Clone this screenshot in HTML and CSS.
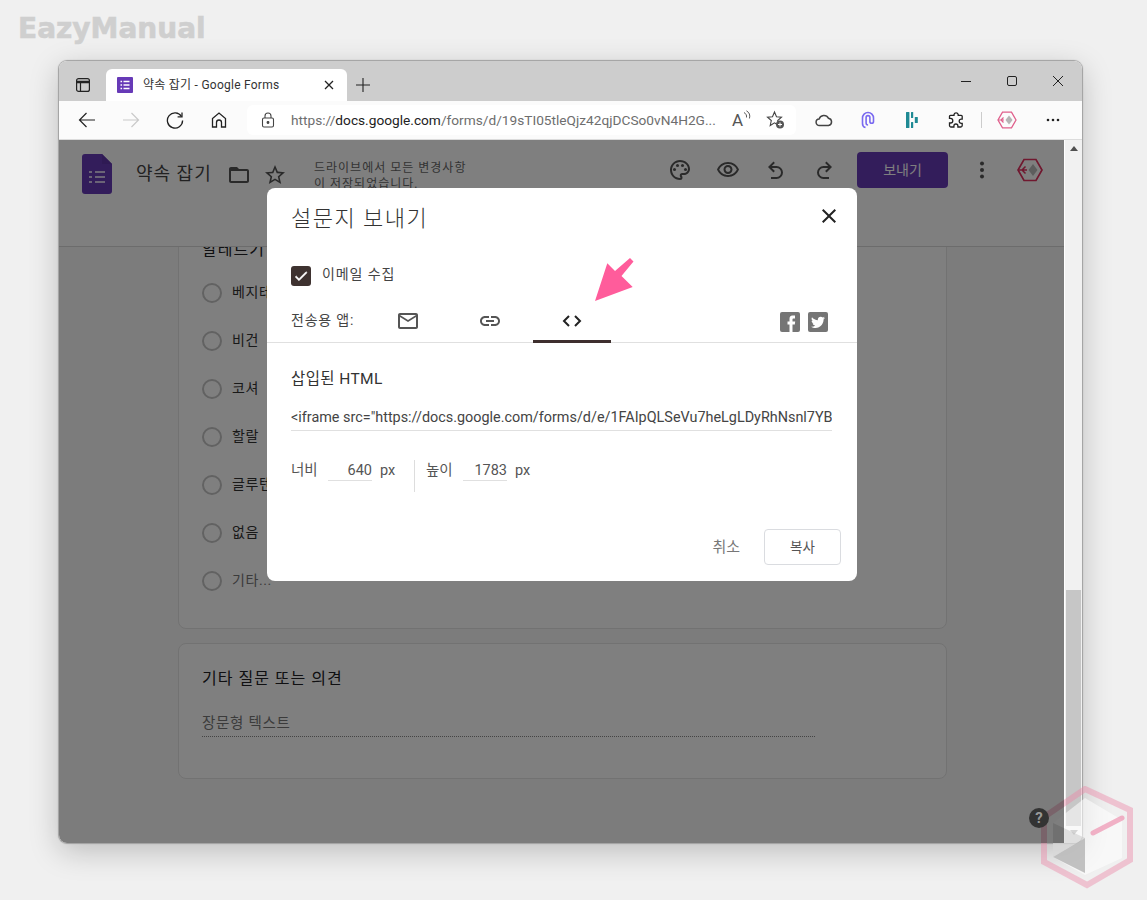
FILE: index.html
```html
<!DOCTYPE html>
<html lang="ko">
<head>
    <meta charset="UTF-8">
    <title>약속 잡기 - Google Forms</title>
    <link rel="stylesheet" href="styles.css">
</head>
<body>
    <div class="brand">EazyManual</div>

    <div class="window">
        <!-- tab strip -->
        <div class="tabstrip">
            <div class="tab-sidebar">
                <svg width="16" height="16" viewBox="0 0 16 16" fill="none" stroke="#222" stroke-width="1.2"><rect x="1.6" y="1.6" width="12.8" height="12.8" rx="2"/><path d="M1.6 5h12.8" stroke-width="2.4"/><path d="M5.5 5v9.4"/></svg>
            </div>
            <div class="tab">
                <svg width="16" height="16" viewBox="0 0 16 16"><rect width="16" height="16" rx="1" fill="#673ab7"/><path d="M3.5 4.5h1.6M6.5 4.5h6M3.5 8h1.6M6.5 8h6M3.5 11.5h1.6M6.5 11.5h6" stroke="#fff" stroke-width="1.6"/></svg>
                <span class="tab-title">약속 잡기 - Google Forms</span>
                <svg width="10" height="10" viewBox="0 0 10 10" stroke="#222" stroke-width="1.3"><path d="M1 1l8 8M9 1l-8 8"/></svg>
            </div>
            <div class="tab-new">
                <svg width="16" height="16" viewBox="0 0 16 16" stroke="#222" stroke-width="1.1"><path d="M8 1v14M1 8h14"/></svg>
            </div>
            <div class="win-controls">
                <svg width="12" height="12" viewBox="0 0 12 12" stroke="#222" stroke-width="1"><path d="M1 6.5h10"/></svg>
                <svg width="12" height="12" viewBox="0 0 12 12" fill="none" stroke="#222" stroke-width="1"><rect x="1.5" y="1.5" width="9" height="9" rx="1.5"/></svg>
                <svg width="12" height="12" viewBox="0 0 12 12" stroke="#222" stroke-width="1"><path d="M1 1l10 10M11 1L1 11"/></svg>
            </div>
        </div>

        <!-- address bar -->
        <div class="toolbar">
            <div class="nav-btn"><svg width="18" height="18" viewBox="0 0 18 18" fill="none" stroke="#222" stroke-width="1.2"><path d="M17 9H1.5M8.5 2L1.5 9l7 7"/></svg></div>
            <div class="nav-btn"><svg width="18" height="18" viewBox="0 0 18 18" fill="none" stroke="#c9c9c9" stroke-width="1.2"><path d="M1 9h15.5M9.5 2l7 7-7 7"/></svg></div>
            <div class="nav-btn"><svg width="18" height="18" viewBox="0 0 18 18" fill="none" stroke="#222" stroke-width="1.3"><path d="M15.5 5.5A7.6 7.6 0 1 0 16.6 9.5"/><path d="M16 1.5v4.4h-4.4"/></svg></div>
            <div class="nav-btn"><svg width="18" height="18" viewBox="0 0 18 18" fill="none" stroke="#222" stroke-width="1.3"><path d="M2.5 16V7.5L9 2l6.5 5.5V16h-4v-4.5a2.3 2.3 0 0 0-5 0V16z"/></svg></div>
            <div class="address">
                <svg width="14" height="16" viewBox="0 0 14 16" fill="none" stroke="#444" stroke-width="1.1"><rect x="1.5" y="6" width="11" height="9" rx="1.5"/><path d="M4 6V4a3 3 0 0 1 6 0v2"/><circle cx="7" cy="10.5" r=".9" fill="#444"/></svg>
                <span class="url"><span class="url-dim">https://</span>docs.google.com<span class="url-dim">/forms/d/19sTI05tleQjz42qjDCSo0vN4H2G...</span></span>
                <span class="read-aloud">A<svg width="8" height="12" viewBox="0 0 8 12" fill="none" stroke="#555" stroke-width="1"><path d="M1 2.5c2 1 3 3 2.5 5M3.5 .8c3 1.5 4 4.5 3 7.7"/></svg></span>
                <svg class="fav" width="20" height="20" viewBox="0 0 20 20"><path d="M8.5 2l2 4.7 5 .5-3.8 3.3 1.1 5-4.3-2.6-4.3 2.6 1.1-5L1.5 7.2l5-.5z" fill="none" stroke="#444" stroke-width="1.1"/><circle cx="14" cy="14.5" r="4" fill="#555"/><path d="M14 12.5v4M12 14.5h4" stroke="#fff" stroke-width="1"/></svg>
            </div>
            <div class="ext-icons">
                <span class="ext-cell"><svg width="18" height="14" viewBox="0 0 18 14" fill="none" stroke="#444" stroke-width="1.5"><path d="M4.5 12.5a3.2 3.2 0 0 1-.4-6.4 5 5 0 0 1 9.3-.9 3.7 3.7 0 0 1 .1 7.3z"/></svg></span>
                <span class="ext-cell"><svg width="14" height="18" viewBox="0 0 14 18" fill="none" stroke="#7a6af0" stroke-width="1.6"><path d="M4.5 16.5A4 4 0 0 1 1.5 12.5V7a5.5 5.5 0 0 1 11 0v3.5a1.8 1.8 0 0 1-3.6 0V6.5a1.9 1.9 0 0 0-3.8 0V12a2 2 0 0 0 2 2"/></svg></span>
                <span class="ext-cell"><svg width="14" height="18" viewBox="0 0 14 18" fill="#1f8a94"><rect x="1" y="1" width="3.4" height="16" rx=".5"/><rect x="6" y="1" width="2.2" height="6" rx=".5"/><rect x="6" y="11" width="2.2" height="6" rx=".5"/><rect x="9.8" y="6" width="3" height="6" rx=".5"/></svg></span>
                <span class="ext-cell"><svg width="18" height="18" viewBox="0 0 18 18" fill="none" stroke="#222" stroke-width="1.3"><path d="M7 3.5a2.2 2.2 0 0 1 4.2 0v.8h3a1 1 0 0 1 1 1v2.900h-.9a2.1 2.1 0 0 0 0 4.200h.9v2.100a1.500 1.500 0 0 1-1.500 1.500h-2.800v-1a2 2 0 0 0-4 0v1H4a1.500 1.500 0 0 1-1.500-1.500V12h1a2.300 2.300 0 0 0 0-4.600h-1V5.300a1 1 0 0 1 1-1H7z"/></svg></span>
                <span class="ext-sep"></span>
                <svg class="ext-hex" width="20" height="18" viewBox="0 0 20 18"><path d="M5.5 1.2h9L19 9l-4.500 7.800h-9L1 9z" fill="none" stroke="#e0608c" stroke-width="1.3"/><path d="M1 9h6M6.500 6.500L4 9l2.500 2.500" fill="none" stroke="#e0608c" stroke-width="1.2"/><path d="M12 4.500L15.500 9 12 13.500 8.500 9z" fill="#b5b5b5"/></svg>
                <svg class="ext-more" width="14" height="4" viewBox="0 0 14 4" fill="#222"><circle cx="2" cy="2" r="1.3"/><circle cx="7" cy="2" r="1.3"/><circle cx="12" cy="2" r="1.3"/></svg>
            </div>
        </div>

        <!-- page with the dialog on top -->
        <div class="viewport">
            <div class="page">
                <header class="form-header">
                    <svg class="form-logo" width="30" height="40" viewBox="0 0 30 40"><path d="M3 0h17l10 10v27a3 3 0 0 1-3 3H3a3 3 0 0 1-3-3V3a3 3 0 0 1 3-3z" fill="#673ab7"/><path d="M20 0l10 10H20z" fill="#5e35a8"/><path d="M7 18h3M13 18h10M7 23h3M13 23h10M7 28h3M13 28h10" stroke="#d6c8ee" stroke-width="2"/></svg>
                    <span class="form-title">약속 잡기</span>
                    <svg class="hdr-icon folder" width="24" height="24" viewBox="0 0 24 24"><path d="M20 6h-8l-2-2H4c-1.100 0-1.990.9-1.990 2L2 18c0 1.100.9 2 2 2h16c1.100 0 2-.9 2-2V8c0-1.100-.9-2-2-2zm0 12H4V8h16v10z"/></svg>
                    <svg class="hdr-icon star" width="24" height="24" viewBox="0 0 24 24"><path d="M22 9.240l-7.190-.62L12 2 9.190 8.630 2 9.240l5.460 4.730L5.820 21 12 17.270 18.180 21l-1.630-7.030L22 9.240zM12 15.400l-3.760 2.270 1-4.280-3.320-2.880 4.380-.38L12 6.100l1.710 4.040 4.380.38-3.320 2.880 1 4.280L12 15.400z"/></svg>
                    <div class="save-status">드라이브에서 모든 변경사항<br>이 저장되었습니다.</div>
                    <div class="hdr-actions">
                        <svg class="hdr-icon" width="24" height="24" viewBox="0 0 24 24"><path d="M12 22C6.490 22 2 17.510 2 12S6.490 2 12 2s10 4.040 10 9c0 3.310-2.690 6-6 6h-1.770c-.28 0-.5.22-.5.5 0 .12.05.23.13.33.41.47.64 1.060.64 1.670A2.500 2.500 0 0 1 12 22zm0-18c-4.410 0-8 3.590-8 8s3.590 8 8 8c.28 0 .5-.22.5-.5a.54.54 0 0 0-.14-.35c-.41-.46-.63-1.050-.63-1.650a2.500 2.500 0 0 1 2.500-2.500H16c2.210 0 4-1.790 4-4 0-3.860-3.590-7-8-7z"/><circle cx="6.500" cy="11.500" r="1.500"/><circle cx="9.500" cy="7.500" r="1.500"/><circle cx="14.500" cy="7.500" r="1.500"/><circle cx="17.500" cy="11.500" r="1.500"/></svg>
                        <svg class="hdr-icon" width="24" height="24" viewBox="0 0 24 24"><path d="M12 6a9.770 9.770 0 0 1 8.820 5.500C19.170 14.870 15.790 17 12 17s-7.170-2.130-8.820-5.500A9.770 9.770 0 0 1 12 6m0-2C7 4 2.730 7.110 1 11.500 2.730 15.890 7 19 12 19s9.270-3.110 11-7.500C21.270 7.110 17 4 12 4zm0 5a2.500 2.500 0 0 1 0 5 2.500 2.500 0 0 1 0-5m0-2c-2.480 0-4.500 2.020-4.500 4.500S9.520 16 12 16s4.500-2.020 4.500-4.500S14.480 7 12 7z"/></svg>
                        <svg class="hdr-icon" width="24" height="24" viewBox="0 0 24 24"><path d="M12.500 8H7.800l3.100-3.100L9.500 3.500 4 9l5.500 5.500 1.400-1.400L7.800 10h4.700a4.500 4.500 0 0 1 0 9H7v2h5.500a6.500 6.500 0 0 0 0-13z"/></svg>
                        <svg class="hdr-icon" width="24" height="24" viewBox="0 0 24 24"><path d="M11.500 8h4.700l-3.100-3.100 1.400-1.400L20 9l-5.500 5.500-1.400-1.400 3.100-3.100h-4.700a4.500 4.500 0 0 0 0 9H17v2h-5.500a6.500 6.500 0 0 1 0-13z"/></svg>
                    </div>
                    <button type="button" class="send-btn">보내기</button>
                    <svg class="hdr-more" width="6" height="18" viewBox="0 0 6 18"><circle cx="3" cy="2.500" r="2"/><circle cx="3" cy="9" r="2"/><circle cx="3" cy="15.500" r="2"/></svg>
                    <svg class="hdr-avatar" width="26" height="24" viewBox="0 0 26 24"><path d="M7 1.500h12L25 12l-6 10.500H7L1 12z" fill="none" stroke="#e0305f" stroke-width="1.700"/><path d="M1 12h9M8.500 8.500L5 12l3.500 3.500" fill="none" stroke="#e0305f" stroke-width="1.500"/><path d="M16 6l4.500 6-4.500 6-4.500-6z" fill="#bbb"/></svg>
                </header>

                <main class="form-body">
                    <section class="card card-options">
                        <h3 class="card-title">알레르기</h3>
                        <div class="option"><span class="radio"></span>베지테리언</div>
                        <div class="option"><span class="radio"></span>비건</div>
                        <div class="option"><span class="radio"></span>코셔</div>
                        <div class="option"><span class="radio"></span>할랄</div>
                        <div class="option"><span class="radio"></span>글루텐 프리</div>
                        <div class="option"><span class="radio"></span>없음</div>
                        <div class="option option-other"><span class="radio"></span>기타...</div>
                    </section>
                    <section class="card card-long">
                        <h3 class="card-title">기타 질문 또는 의견</h3>
                        <div class="long-answer">장문형 텍스트</div>
                    </section>
                </main>

                <div class="scrim"></div>
                <div class="help">?</div>

                <!-- send form dialog -->
                <div class="dialog">
                    <div class="dialog-head">
                        <h2>설문지 보내기</h2>
                        <svg width="24" height="24" viewBox="0 0 24 24" fill="#222"><path d="M19 6.410L17.590 5 12 10.590 6.410 5 5 6.410 10.590 12 5 17.590 6.410 19 12 13.410 17.590 19 19 17.590 13.410 12z"/></svg>
                    </div>
                    <label class="collect">
                        <span class="checkbox"><svg width="16" height="16" viewBox="0 0 24 24" fill="#fff"><path d="M9 16.170L4.830 12l-1.420 1.410L9 19 21 7l-1.410-1.410z" stroke="#fff"/></svg></span>
                        <span class="collect-text">이메일 수집</span>
                    </label>
                    <div class="send-tabs">
                        <span class="send-label">전송용 앱:</span>
                        <div class="send-tab">
                            <svg width="24" height="24" viewBox="0 0 24 24" fill="#555"><path d="M20 4H4c-1.100 0-2 .9-2 2v12c0 1.100.9 2 2 2h16c1.100 0 2-.9 2-2V6c0-1.100-.9-2-2-2zm0 14H4V8l8 5 8-5v10zm-8-7L4 6h16l-8 5z"/></svg>
                        </div>
                        <div class="send-tab">
                            <svg width="24" height="24" viewBox="0 0 24 24" fill="#555"><path d="M3.900 12c0-1.710 1.390-3.100 3.100-3.100h4V7H7c-2.760 0-5 2.240-5 5s2.240 5 5 5h4v-1.900H7c-1.710 0-3.100-1.390-3.100-3.100zM8 13h8v-2H8v2zm9-6h-4v1.900h4c1.710 0 3.100 1.390 3.100 3.100s-1.390 3.100-3.100 3.100h-4V17h4c2.760 0 5-2.240 5-5s-2.240-5-5-5z"/></svg>
                        </div>
                        <div class="send-tab send-tab-active">
                            <svg width="24" height="24" viewBox="0 0 24 24" fill="none" stroke="#222" stroke-width="2"><path d="M9 7l-5 5 5 5M15 7l5 5-5 5"/></svg>
                        </div>
                        <div class="social">
                            <span class="social-btn"><svg width="20" height="20" viewBox="0 0 20 20" fill="#fff"><path d="M15 3.500h-2.500C10.300 3.500 9.500 5 9.500 7v2.500h-2v3h2V20h3v-7.500h2.300l.4-3h-2.700V7.500c0-.7.3-1 1-1H15z"/></svg></span>
                            <span class="social-btn"><svg width="16" height="16" viewBox="0 0 24 24" fill="#fff"><path d="M22.460 6c-.77.35-1.600.58-2.460.69.88-.53 1.560-1.370 1.880-2.380-.83.5-1.750.85-2.720 1.050C18.370 4.500 17.260 4 16 4c-2.350 0-4.270 1.920-4.270 4.290 0 .34.04.67.11.98C8.280 9.090 5.110 7.380 3 4.790c-.37.63-.58 1.370-.58 2.150 0 1.490.75 2.810 1.910 3.560-.71 0-1.370-.2-1.950-.5v.03c0 2.080 1.480 3.820 3.440 4.210a4.220 4.220 0 0 1-1.930.07 4.280 4.280 0 0 0 4 2.980 8.520 8.520 0 0 1-5.330 1.840c-.34 0-.68-.02-1.020-.06C3.440 20.290 5.700 21 8.120 21 16 21 20.330 14.460 20.330 8.790c0-.19 0-.37-.01-.56.84-.6 1.560-1.360 2.140-2.230z"/></svg></span>
                        </div>
                    </div>
                    <div class="embed">
                        <h4>삽입된 HTML</h4>
                        <div class="embed-code">&lt;iframe src="https://docs.google.com/forms/d/e/1FAIpQLSeVu7heLgLDyRhNsnl7YB</div>
                        <div class="embed-size">
                            <span class="size-label">너비</span>
                            <span class="size-input">640</span>
                            <span class="size-unit">px</span>
                            <span class="size-sep"></span>
                            <span class="size-label">높이</span>
                            <span class="size-input">1783</span>
                            <span class="size-unit">px</span>
                        </div>
                    </div>
                    <div class="dialog-actions">
                        <button type="button" class="btn-cancel">취소</button>
                        <button type="button" class="btn-copy">복사</button>
                    </div>
                </div>

                <svg class="pointer" width="50" height="50" viewBox="0 0 50 50" fill="#ff5c9b"><path d="M1 46L13.300 8.300 21 16 36 3l3.500 3.500L27.500 21l11.200 11z"/></svg>
            </div>
            <div class="scrollbar">
                <span class="arrow-up"></span>
                <span class="thumb"></span>
                <span class="arrow-down"></span>
            </div>
        </div>
    </div>

    <!-- logo stamp in the corner -->
    <svg class="stamp" width="96" height="106" viewBox="0 0 96 106">
        <path d="M44 3l45 21v50L46 99 3 76V31z" fill="none" stroke="rgba(236,130,165,.42)" stroke-width="6"/>
        <path d="M12 37l32-25 37 22v38L44 89 12 71z" fill="rgba(255,255,255,.55)"/>
        <path d="M12 37l32 15-32 19z" fill="rgba(190,190,190,.45)"/>
        <path d="M12 71l32-19v35z" fill="rgba(175,175,175,.75)"/>
        <path d="M52 47l29-15" stroke="rgba(236,130,165,.6)" stroke-width="5" stroke-linecap="round"/>
    </svg>
</body>
</html>
```

FILE: styles.css
```css
* {
    box-sizing: border-box;
}
html, body {
    height: 100%;
}
body {
    margin: 0;
    padding: 61px 0 0 59px;
    background-color: #f0f0f0;
    font-family: Roboto, "Noto Sans CJK KR", sans-serif;
    overflow: hidden;
    position: relative;
}
button {
    font-family: inherit;
}
.brand {
    position: absolute;
    left: 18px;
    top: 12px;
    font-family: "DejaVu Sans", sans-serif;
    font-weight: bold;
    font-size: 28px;
    color: #cfcfcf;
    -webkit-text-stroke: 0.6px #cfcfcf;
}
.window {
    width: 1023px;
    height: 782px;
    border-radius: 8px;
    overflow: hidden;
    background-color: #fff;
    box-shadow: 0 0 1px 1px #a0a0a0, 0 8px 30px rgba(0, 0, 0, 0.22);
    display: flex;
    flex-direction: column;
}

/* tab strip */
.tabstrip {
    height: 40px;
    flex: none;
    background-color: #cdcdcd;
    display: flex;
    align-items: flex-end;
}
.tab-sidebar {
    width: 47px;
    height: 32px;
    display: flex;
    align-items: center;
    justify-content: center;
}
.tab {
    width: 241px;
    height: 32px;
    background-color: #fff;
    border-radius: 6px 6px 0 0;
    display: flex;
    align-items: center;
    padding: 0 13px 0 11px;
}
.tab-title {
    flex: 1;
    margin-left: 10px;
    padding-bottom: 3px;
    font-size: 12px;
    letter-spacing: 0.25px;
    color: #333;
}
.tab-new {
    width: 32px;
    height: 32px;
    display: flex;
    align-items: center;
    justify-content: center;
}
.win-controls {
    margin-left: auto;
    margin-right: 18px;
    height: 40px;
    display: flex;
    align-items: center;
    gap: 34px;
}

/* address bar */
.toolbar {
    height: 39px;
    flex: none;
    background-color: #fbfbfb;
    border-bottom: 1px solid #dcdcdc;
    display: flex;
    align-items: center;
    padding-left: 6px;
}
.nav-btn {
    width: 44px;
    display: flex;
    justify-content: center;
}
.address {
    width: 549px;
    height: 30px;
    margin-left: 6px;
    background-color: #fff;
    border-radius: 6px;
    display: flex;
    align-items: center;
    padding-left: 14px;
}
.url {
    margin-left: 16px;
    width: 425px;
    font-size: 13.7px;
    color: #222;
    white-space: nowrap;
}
.url-dim {
    color: #6e6e6e;
}
.read-aloud {
    margin-left: 16px;
    font-size: 17px;
    line-height: 20px;
    color: #555;
    display: flex;
    width: 19px;
}
.fav {
    margin-left: 15px;
}
.ext-icons {
    flex: 1;
    display: flex;
    align-items: center;
    padding-left: 6px;
}
.ext-cell {
    width: 44px;
    display: flex;
    justify-content: center;
}
.ext-sep {
    width: 1px;
    height: 16px;
    margin-left: 3px;
    background-color: #ccc;
}
.ext-hex {
    margin-left: 15px;
}
.ext-more {
    margin-left: 29px;
}

/* page */
.viewport {
    flex: 1;
    display: flex;
    min-height: 0;
}
.page {
    flex: 1;
    position: relative;
    overflow: hidden;
    background-color: #f8f8f8;
    display: flex;
    flex-direction: column;
}
.form-header {
    height: 107px;
    flex: none;
    background-color: #fff;
    border-bottom: 1px solid #d8d8d8;
    display: flex;
    align-items: flex-start;
    padding: 14px 0 0 23px;
    position: relative;
    z-index: 1;
}
.form-logo {
    flex: none;
}
.form-title {
    margin: 8px 0 0 24px;
    width: 75px;
    font-size: 18px;
    line-height: 24px;
    letter-spacing: 1px;
    white-space: nowrap;
    color: #444;
}
.hdr-icon {
    fill: #555;
    flex: none;
}
.folder {
    margin: 9px 0 0 16px;
}
.star {
    margin: 9px 0 0 12px;
}
.save-status {
    margin: 6px 0 0 27px;
    width: 170px;
    font-size: 12px;
    line-height: 16px;
    letter-spacing: 1px;
    white-space: nowrap;
    color: #666;
}
.hdr-actions {
    margin: 4px 0 0 184px;
    display: flex;
    gap: 24px;
}
.send-btn {
    width: 91px;
    height: 36px;
    margin: -2px 0 0 21px;
    padding-bottom: 3px;
    border: none;
    border-radius: 4px;
    background-color: #673ab7;
    color: #fff;
    font-size: 14px;
}
.hdr-more {
    margin: 7px 0 0 31px;
    fill: #555;
}
.hdr-avatar {
    margin: 4px 0 0 32px;
}
.form-body {
    flex: 1;
    padding-left: 119px;
    min-height: 0;
}
.card {
    width: 769px;
    background-color: #fff;
    border: 1px solid #e4e4e4;
    border-radius: 8px;
    padding-left: 23px;
}
.card-title {
    margin: 0;
    font-weight: normal;
    font-size: 16px;
    line-height: 24px;
    letter-spacing: 1px;
    color: #202124;
}
.card-options {
    margin-top: -21px;
    height: 403px;
    padding-top: 11px;
    margin-bottom: 14px;
}
.card-options .card-title {
    margin-bottom: 7px;
}
.option {
    height: 48px;
    padding-bottom: 5px;
    display: flex;
    align-items: center;
    font-size: 14px;
    letter-spacing: 0.6px;
    color: #333;
}
.option-other {
    color: #777;
}
.radio {
    width: 20px;
    height: 20px;
    margin: 5px 10px 0 0;
    border: 2px solid #c4c4c4;
    border-radius: 50%;
}
.card-long {
    height: 136px;
    padding-top: 23px;
}
.long-answer {
    width: 613px;
    margin-top: 20px;
    height: 26px;
    border-bottom: 1px dotted #888;
    font-size: 14.5px;
    letter-spacing: 0.7px;
    color: #777;
}
.scrim {
    position: absolute;
    inset: 0;
    z-index: 2;
    background-color: rgba(0, 0, 0, 0.5);
}
.help {
    position: absolute;
    right: 15px;
    bottom: 15px;
    z-index: 3;
    width: 20px;
    height: 20px;
    border-radius: 50%;
    background-color: #333;
    color: #999;
    font-size: 15px;
    font-weight: bold;
    line-height: 20px;
    text-align: center;
}

/* dialog */
.dialog {
    position: absolute;
    left: 208px;
    top: 48px;
    z-index: 4;
    width: 590px;
    height: 393px;
    background-color: #fff;
    border-radius: 8px;
    display: flex;
    flex-direction: column;
}
.dialog-head {
    height: 64px;
    flex: none;
    padding: 16px 16px 0 24px;
    display: flex;
    justify-content: space-between;
}
.dialog-head h2 {
    margin: -1px 0 0;
    font-weight: 300;
    font-size: 22px;
    line-height: 32px;
    letter-spacing: 1.5px;
    color: #333;
}
.collect {
    height: 24px;
    margin: 12px 0 0 24px;
    display: flex;
    align-items: center;
    gap: 11px;
    font-size: 14px;
    letter-spacing: 0.9px;
    color: #444;
}
.collect-text {
    padding-bottom: 6px;
}
.checkbox {
    width: 20px;
    height: 20px;
    border-radius: 3px;
    background-color: #3e3230;
    display: flex;
    align-items: center;
    justify-content: center;
}
.send-tabs {
    height: 53px;
    margin-top: 2px;
    flex: none;
    border-bottom: 1px solid #e0e0e0;
    display: flex;
    padding-left: 24px;
    position: relative;
}
.send-label {
    width: 90px;
    margin-right: -12px;
    padding-top: 19px;
    font-size: 14px;
    letter-spacing: 0.8px;
    white-space: nowrap;
    color: #444;
}
.send-tab {
    width: 78px;
    margin-right: 4px;
    padding-top: 19px;
    display: flex;
    justify-content: center;
}
.send-tab-active {
    border-bottom: 3px solid #3e2f2e;
    margin-bottom: -1px;
}
.social {
    margin-left: auto;
    margin-right: 29px;
    padding-top: 22px;
    display: flex;
    gap: 8px;
}
.social-btn {
    width: 20px;
    height: 20px;
    border-radius: 2px;
    background-color: #757575;
    display: flex;
    align-items: center;
    justify-content: center;
    overflow: hidden;
}
.embed {
    padding: 0 25px 0 24px;
}
.embed h4 {
    margin: 24px 0 0;
    font-weight: normal;
    font-size: 15.5px;
    line-height: 24px;
    letter-spacing: 0.4px;
    color: #333;
}
.embed-code {
    margin-top: 17px;
    height: 23px;
    border-bottom: 1px solid #e0e0e0;
    font-size: 14.4px;
    line-height: 20px;
    color: #444;
    white-space: nowrap;
    overflow: hidden;
}
.embed-size {
    margin-top: 29px;
    height: 32px;
    display: flex;
    align-items: flex-start;
    font-size: 14.5px;
    color: #555;
}
.size-label {
    width: 28px;
    line-height: 22px;
}
.size-input {
    width: 44px;
    height: 21px;
    margin-left: 9px;
    border-bottom: 1px solid #e0e0e0;
    text-align: right;
    line-height: 22px;
}
.size-unit {
    width: 15px;
    margin-left: 8px;
    line-height: 22px;
}
.size-sep {
    width: 1px;
    height: 32px;
    margin: 0 11px 0 19px;
    background-color: #ddd;
}
.dialog-actions {
    margin-top: auto;
    padding: 0 16px 16px 0;
    display: flex;
    justify-content: flex-end;
    align-items: center;
    gap: 24px;
}
.btn-cancel {
    border: none;
    background: none;
    padding: 0 0 3px;
    font-size: 15px;
    color: #777;
}
.btn-copy {
    width: 77px;
    height: 36px;
    padding-bottom: 3px;
    border: 1px solid #dadce0;
    border-radius: 4px;
    background-color: #fff;
    font-size: 13.5px;
    color: #555;
}
.pointer {
    position: absolute;
    left: 535px;
    top: 115px;
    z-index: 5;
}

/* scrollbar */
.scrollbar {
    width: 18px;
    flex: none;
    background-color: #f1f1f1;
    display: flex;
    flex-direction: column;
    align-items: center;
    padding-top: 6px;
    border-left: 1px solid #fff;
}
.arrow-up {
    border: 4px solid transparent;
    border-top: none;
    border-bottom: 5px solid #505050;
}
.thumb {
    width: 15px;
    height: 236px;
    margin-top: 439px;
    background-color: #c6c6c6;
}
.arrow-down {
    margin-top: 4px;
    border: 4px solid transparent;
    border-bottom: none;
    border-top: 5px solid #a0a0a0;
}
.stamp {
    position: absolute;
    left: 1041px;
    top: 786px;
}
```
